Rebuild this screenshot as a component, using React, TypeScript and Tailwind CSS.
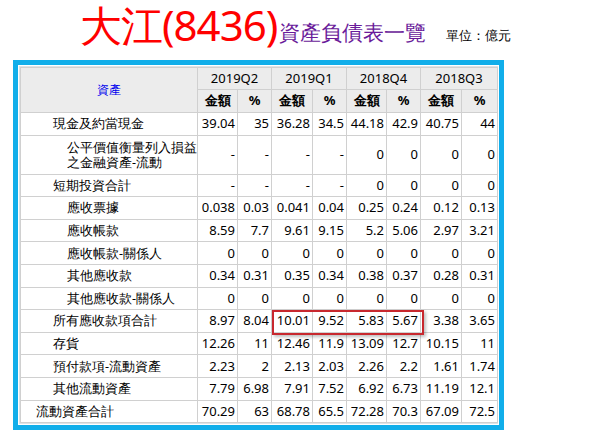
const rows: [string, number, string[]][] = [
  ["現金及約當現金", 1, ["39.04", "35", "36.28", "34.5", "44.18", "42.9", "40.75", "44"]],
  ["公平價值衡量列入損益\n之金融資產-流動", 2, ["-", "-", "-", "-", "0", "0", "0", "0"]],
  ["短期投資合計", 1, ["-", "-", "-", "-", "0", "0", "0", "0"]],
  ["應收票據", 2, ["0.038", "0.03", "0.041", "0.04", "0.25", "0.24", "0.12", "0.13"]],
  ["應收帳款", 2, ["8.59", "7.7", "9.61", "9.15", "5.2", "5.06", "2.97", "3.21"]],
  ["應收帳款-關係人", 2, ["0", "0", "0", "0", "0", "0", "0", "0"]],
  ["其他應收款", 2, ["0.34", "0.31", "0.35", "0.34", "0.38", "0.37", "0.28", "0.31"]],
  ["其他應收款-關係人", 2, ["0", "0", "0", "0", "0", "0", "0", "0"]],
  ["所有應收款項合計", 1, ["8.97", "8.04", "10.01", "9.52", "5.83", "5.67", "3.38", "3.65"]],
  ["存貨", 1, ["12.26", "11", "12.46", "11.9", "13.09", "12.7", "10.15", "11"]],
  ["預付款項-流動資產", 1, ["2.23", "2", "2.13", "2.03", "2.26", "2.2", "1.61", "1.74"]],
  ["其他流動資產", 1, ["7.79", "6.98", "7.91", "7.52", "6.92", "6.73", "11.19", "12.1"]],
  ["流動資產合計", 0, ["70.29", "63", "68.78", "65.5", "72.28", "70.3", "67.09", "72.5"]],
];

const cols = ["w-[40px]", "w-[34px]", "w-[41px]", "w-[34px]", "w-[40px]", "w-[34px]", "w-[41px]", "w-[36px]"];
const sans = "font-[family-name:'Noto_Sans_CJK_TC',sans-serif]";
const serif = "font-[family-name:'Liberation_Serif','Noto_Sans_CJK_TC',serif]";

export default function App() {
  return (
    <div className={`w-[600px] h-[444px] bg-white ${serif} text-[13px] text-black`}>
      <div className="flex items-end h-[52px] pl-[80px] pb-[6px]">
        <span className={`text-[42px] leading-none text-[#ff0000] ${sans} tracking-[-1px]`}>大江(8436)</span>
        <span className={`text-[21px] leading-none text-[#6a1b9a] ${sans} ml-[2px] mb-[3px]`}>資產負債表一覽</span>
        <span className={`text-[13px] leading-none ${sans} ml-[20px] mb-[4px]`}>單位：億元</span>
      </div>
      <div className="ml-[13px] mt-[8px] w-[491px] border-[5px] border-[#11aeea] bg-[#11aeea]">
        <div className="border border-white bg-[#dde3e7] p-[1px]">
          <div className="relative bg-white">
            <table className="w-full table-fixed border-collapse">
              <colgroup>
                <col className="w-[177px]" />
                {cols.map((c, i) => <col key={i} className={c} />)}
              </colgroup>
              <thead className="bg-[#ececec]">
                <tr className="h-[22px]">
                  <th rowSpan={2} className={`border border-[#d0d0d0] font-normal text-[#0000ee] ${sans} text-[12px]`}>資產</th>
                  {["2019Q2", "2019Q1", "2018Q4", "2018Q3"].map((q) => (
                    <th key={q} colSpan={2} className="border border-[#d0d0d0] font-normal">{q}</th>
                  ))}
                </tr>
                <tr className="h-[23px]">
                  {cols.map((c, i) => (
                    <th key={i} className={`border border-[#d0d0d0] font-bold ${sans} text-[13px] p-0`}>
                      {i % 2 === 0 ? "金額" : "%"}
                    </th>
                  ))}
                </tr>
              </thead>
              <tbody>
                {rows.map(([label, indent, vals]) => (
                  <tr key={label} className={label.includes("\n") ? "h-[39px]" : "h-[22.6px]"}>
                    <td className={`border border-[#d0d0d0] ${sans} text-[12.5px] leading-[15px] whitespace-pre-line ${indent === 2 ? "pl-[46px]" : indent === 1 ? "pl-[32px]" : "pl-[15px]"}`}>{label}</td>
                    {vals.map((v, i) => (
                      <td key={i} className="border border-[#d0d0d0] text-right pr-[2px] leading-[15px] p-0">{v}</td>
                    ))}
                  </tr>
                ))}
              </tbody>
            </table>
            <div className="absolute left-[252px] top-[243px] w-[152px] h-[25px] border-2 border-[#c8282e] shadow-[2px_2px_3px_rgba(0,0,0,0.25)]" />
          </div>
        </div>
      </div>
    </div>
  );
}
